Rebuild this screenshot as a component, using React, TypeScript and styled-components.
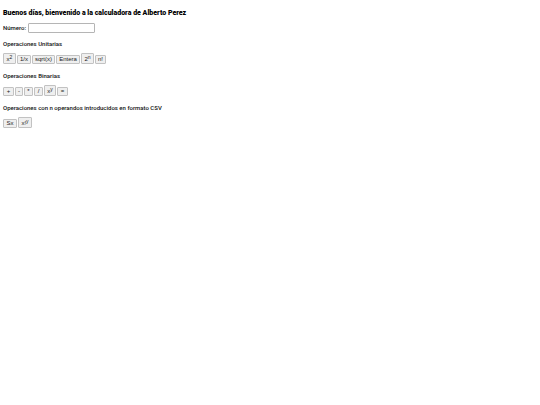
import React from "react";
import styled, { createGlobalStyle } from "styled-components";

const GlobalStyle = createGlobalStyle`
  body {
    margin: 0;
    background: #fff;
    color: #000;
    font-family: "Roboto", "Liberation Sans", sans-serif;
    font-size: 6px;
    line-height: 8px;
  }
`;

const Page = styled.main`
  display: flex;
  flex-direction: column;
  padding: 9px 3px;
`;

const Title = styled.h1`
  margin: 0 0 5px;
  font-size: 7px;
  line-height: 9px;
  font-weight: 900;
`;

const Field = styled.div`
  display: flex;
  align-items: center;
  gap: 2px;
  margin-bottom: 7px;
  font-weight: 500;
  color: #111;
`;

const NumberInput = styled.input`
  box-sizing: border-box;
  width: 67px;
  height: 10px;
  padding: 0 1px;
  border: 1px solid #b5b5b5;
  border-radius: 1px;
  background: #fff;
  font: 6px "Liberation Sans", sans-serif;
`;

const Section = styled.section`
  display: flex;
  flex-direction: column;
  gap: 5px;
  margin-bottom: 8px;
`;

const SectionTitle = styled.h2`
  margin: 0;
  font-size: 6px;
  line-height: 8px;
  font-weight: 500;
  color: #111;
`;

const Keys = styled.div`
  display: flex;
  align-items: flex-end;
  gap: 1px;
`;

const Key = styled.button<{ $width: number; $raised?: boolean }>`
  display: flex;
  align-items: center;
  justify-content: center;
  box-sizing: border-box;
  width: ${(p) => p.$width}px;
  height: ${(p) => (p.$raised ? 11 : 9)}px;
  padding: ${(p) => (p.$raised ? "2px 0 0" : "0")};
  border: 1px solid #c2c2c2;
  border-radius: 1px;
  background: #efefef;
  color: #222;
  font: 6px/7px "Liberation Sans", sans-serif;
  white-space: nowrap;

  sup {
    align-self: flex-start;
    margin-top: -1px;
    font-size: 5px;
    line-height: 5px;
  }
`;

type KeyDef = { base: string; power?: string; width: number };

const sections: { title: string; keys: KeyDef[] }[] = [
  {
    title: "Operaciones Unitarias",
    keys: [
      { base: "x", power: "2", width: 13 },
      { base: "1/x", width: 14 },
      { base: "sqrt(x)", width: 23 },
      { base: "Entera", width: 24 },
      { base: "2", power: "n", width: 13 },
      { base: "n!", width: 11 },
    ],
  },
  {
    title: "Operaciones Binarias",
    keys: [
      { base: "+", width: 11 },
      { base: "-", width: 8 },
      { base: "*", width: 9 },
      { base: "/", width: 9 },
      { base: "x", power: "y", width: 12 },
      { base: "=", width: 11 },
    ],
  },
  {
    title: "Operaciones con n operandos introducidos en formato CSV",
    keys: [
      { base: "Sx", width: 14 },
      { base: "x!", power: "y", width: 14 },
    ],
  },
];

export default function App() {
  return (
    <>
      <GlobalStyle />
      <Page>
        <Title>Buenos días, bienvenido a la calculadora de Alberto Perez</Title>
        <Field>
          <label htmlFor="numero">Número:</label>
          <NumberInput id="numero" type="text" />
        </Field>
        {sections.map((section) => (
          <Section key={section.title}>
            <SectionTitle>{section.title}</SectionTitle>
            <Keys>
              {section.keys.map((key) => (
                <Key
                  key={key.base + (key.power ?? "")}
                  type="button"
                  $width={key.width}
                  $raised={Boolean(key.power)}
                >
                  {key.base}
                  {key.power && <sup>{key.power}</sup>}
                </Key>
              ))}
            </Keys>
          </Section>
        ))}
      </Page>
    </>
  );
}
